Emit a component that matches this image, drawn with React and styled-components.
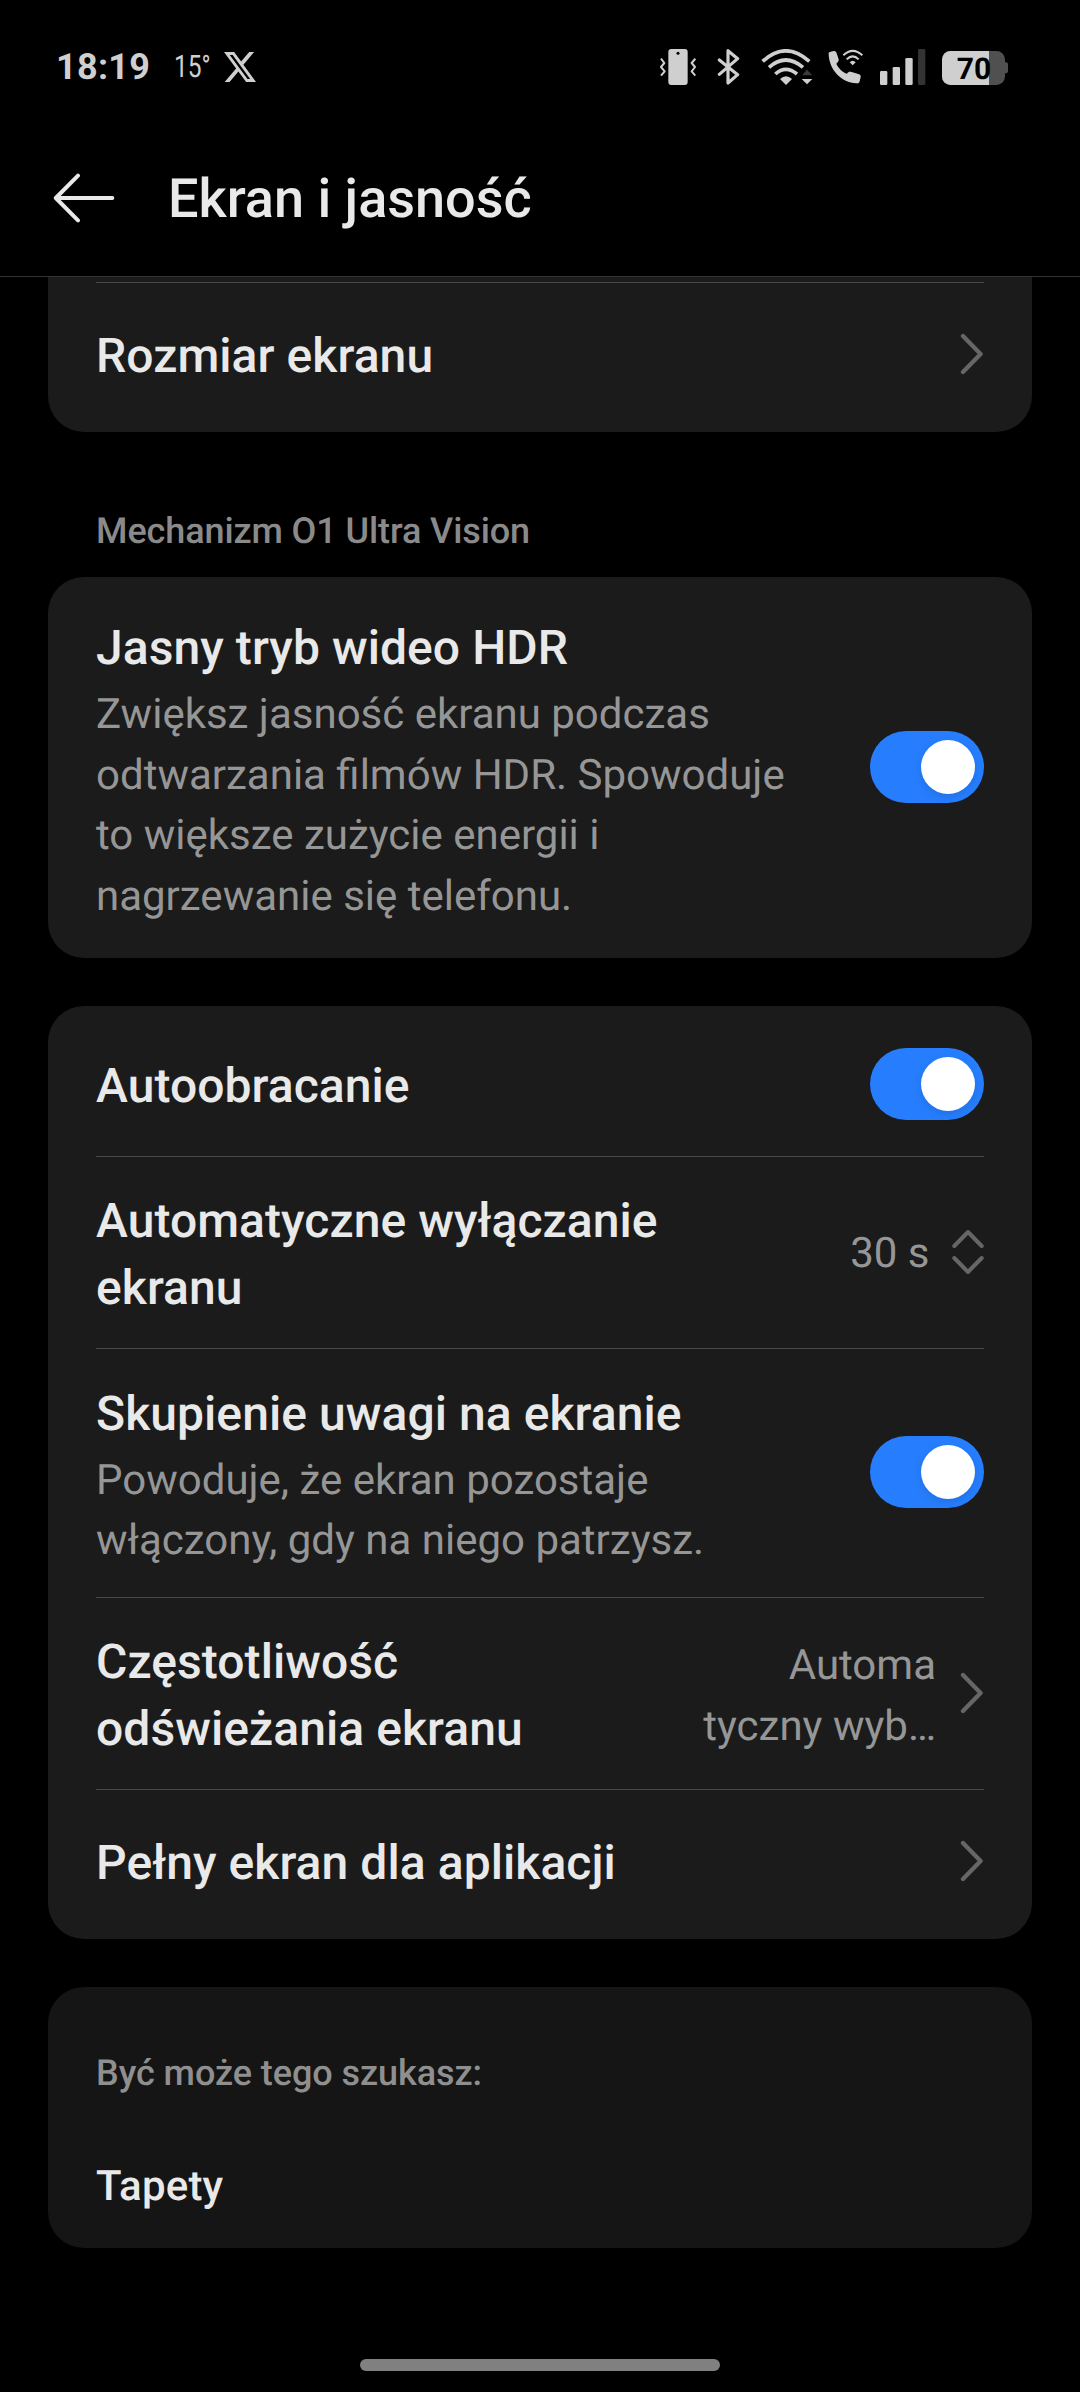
import { useState } from "react";
import styled, { createGlobalStyle } from "styled-components";

const GlobalStyle = createGlobalStyle`
  * {
    box-sizing: border-box;
  }
  body {
    margin: 0;
    background: #000;
    color: #e9e9e9;
    font-family: Roboto, "Noto Sans", sans-serif;
    text-rendering: geometricPrecision;
  }
`

const VibrateIcon = () => (
  <svg width="36" height="36" viewBox="60 57 108 108">
    <rect x="85" y="57" width="58" height="108" rx="9" fill="#cfcfcf" />
    <circle cx="114" cy="70" r="4.5" fill="#000" />
    <path d="M63 86L73 99L63 111L74 124L63 137M166 86L155 99L165 111L155 124L166 137" fill="none" stroke="#cfcfcf" strokeWidth="6" strokeLinejoin="round" />
  </svg>
);

const BluetoothIcon = () => (
  <svg width="33" height="36" viewBox="216 57 99 108">
    <path d="M238 90L293 134L264 159V62L293 86L238 133" fill="none" stroke="#cfcfcf" strokeWidth="9.5" strokeLinejoin="round" strokeLinecap="round" />
  </svg>
);

const WifiIcon = () => (
  <svg width="52" height="36" viewBox="363 57 156 108">
    <g fill="none" stroke="#cfcfcf" strokeWidth="11" strokeLinecap="butt">
      <path d="M368 94Q437 31 508 94" />
      <path d="M387 112Q437 68 489 112" />
      <path d="M406 132Q437 104 471 132" />
    </g>
    <path d="M420 147Q438 130 456 147L438 165Z" fill="#cfcfcf" />
    <path d="M486 136H517L501 119Z" fill="#3a3a3a" />
    <path d="M485 147H517L501 163Z" fill="#cfcfcf" />
  </svg>
);

const WifiCallIcon = () => (
  <svg width="35" height="36" viewBox="27 57 105 108" overflow="visible">
    <path d="M26 72C25 66 32 65 41 63C46 62 49 66 50 70L56 88C57 92 55 95 51 99L49 101C55 115 68 127 81 131C85 125 89 124 95 126L115 132C121 134 123 137 122 141L119 154C118 159 114 161 109 160C65 158 27 120 26 72Z" fill="#cfcfcf" />
    <path d="M70 76Q98 49 127 76M80 88Q98 70 116 88" fill="none" stroke="#cfcfcf" strokeWidth="6" />
    <path d="M89 97Q98 88 107 97L98 106Z" fill="#cfcfcf" />
  </svg>
);

const SignalIcon = () => (
  <svg width="46" height="36" viewBox="180 57 138 108">
    <g fill="#cfcfcf">
      <rect x="180" y="123" width="22" height="42" rx="4" />
      <rect x="218" y="111" width="22" height="54" rx="4" />
      <rect x="256" y="84" width="22" height="81" rx="4" />
    </g>
    <rect x="294" y="57" width="22" height="108" rx="4" fill="#333" />
  </svg>
);

const BatteryIcon = ({ level }) => (
  <svg width="66" height="36" viewBox="0 0 66 36" overflow="visible">
    <clipPath id="battery-shape">
      <rect x="0" y="2" width="63" height="34" rx="8.5" />
    </clipPath>
    <rect x="60" y="13.3" width="6" height="11" rx="2" fill="#505050" />
    <g clipPath="url(#battery-shape)">
      <rect x="0" y="2" width="63" height="34" fill="#505050" />
      <rect x="0" y="2" width="47" height="34" fill="#cfcfcf" />
    </g>
    <text x="32" y="30.3" textAnchor="middle" fontFamily="Roboto, sans-serif" fontSize="30" fontWeight="700" fill="#000">{level}</text>
  </svg>
);

const XLogo = () => (
  <svg width="32" height="30" viewBox="0 1.15 24 21.7" preserveAspectRatio="none">
    <path fill="#cfcfcf" d="M18.901 1.153h3.68l-8.04 9.19L24 22.846h-7.406l-5.8-7.584-6.638 7.584H.474l8.6-9.83L0 1.154h7.594l5.243 6.932ZM17.61 20.644h2.039L6.486 3.24H4.298Z" />
  </svg>
);

const BackIcon = () => (
  <svg width="62" height="50" viewBox="0 0 62 50" fill="none" stroke="#e9e9e9" strokeWidth="4" strokeLinecap="round" strokeLinejoin="round">
    <path d="M59.3 25H3M25 2.6L2.8 25L25 47.4" />
  </svg>
);

const ChevronIcon = () => (
  <svg width="24" height="42" viewBox="0 0 24 42" fill="none" stroke="#666" strokeWidth="4.3" strokeLinecap="round" strokeLinejoin="round">
    <path d="M3 3L20.6 21L3 39" />
  </svg>
);

const StepperIcon = () => (
  <svg width="32" height="46" viewBox="0 0 32 46" fill="none" stroke="#666" strokeWidth="4" strokeLinecap="round" strokeLinejoin="round">
    <path d="M2.3 17L16 3L29.7 17M2.3 29L16 43L29.7 29" />
  </svg>
);

const Switch = ({ label }) => {
  const [on, setOn] = useState(true);
  return (
    <Track type="button" role="switch" aria-checked={on} aria-label={label} $on={on} onClick={() => setOn(!on)}>
      <Knob />
    </Track>
  );
};

const Setting = ({ title, text, value, height, divider, shift, valueShift, endGap = 24, lift = 1, children }) => (
  <Row $height={height} $divider={divider}>
    <RowText $shift={shift}>
      <RowTitle>{title}</RowTitle>
      {text && <RowDescription>{text}</RowDescription>}
    </RowText>
    <RowEnd $gap={endGap} $lift={lift}>
      {value && <Value $shift={valueShift}>{value}</Value>}
      {children}
    </RowEnd>
  </Row>
);

const App = () => {
  return (
    <Screen>
      <GlobalStyle />
      <StatusBar>
        <Clock>18:19</Clock>
        <Temperature>15°</Temperature>
        <XLogo />
        <StatusIcons>
          <VibrateIcon />
          <BluetoothIcon />
          <WifiIcon />
          <WifiCallIcon />
          <SignalIcon />
          <BatteryIcon level={70} />
        </StatusIcons>
      </StatusBar>
      <Header>
        <BackIcon />
        <PageTitle>Ekran i jasność</PageTitle>
      </Header>
      <Content>
        <Card $cut>
          <Row $height={6} $divider />
          <Setting title="Rozmiar ekranu" height={143} shift={2}>
            <ChevronIcon />
          </Setting>
        </Card>
        <SectionTitle>Mechanizm O1 Ultra Vision</SectionTitle>
        <Card>
          <Setting
            title="Jasny tryb wideo HDR"
            text="Zwiększ jasność ekranu podczas odtwarzania filmów HDR. Spowoduje to większe zużycie energii i nagrzewanie się telefonu."
            height={369}
            shift={6}
          >
            <Switch label="Jasny tryb wideo HDR" />
          </Setting>
        </Card>
        <Card $spaced>
          <Setting title="Autoobracanie" height={145} divider shift={3}>
            <Switch label="Autoobracanie" />
          </Setting>
          <Setting title="Automatyczne wyłączanie ekranu" value="30 s" height={192} divider shift={3} valueShift={2} endGap={22.5}>
            <StepperIcon />
          </Setting>
          <Setting
            title="Skupienie uwagi na ekranie"
            text="Powoduje, że ekran pozostaje włączony, gdy na niego patrzysz."
            height={249}
            divider
            shift={5}
            lift={2}
          >
            <Switch label="Skupienie uwagi na ekranie" />
          </Setting>
          <Setting
            title="Częstotliwość odświeżania ekranu"
            value={<>Automa<br />tyczny wyb…</>}
            height={192}
            divider
            shift={3}
            valueShift={5}
          >
            <ChevronIcon />
          </Setting>
          <Setting title="Pełny ekran dla aplikacji" height={143} shift={1}>
            <ChevronIcon />
          </Setting>
        </Card>
        <SuggestionCard>
          <SuggestionLabel>Być może tego szukasz:</SuggestionLabel>
          <SuggestionLink>Tapety</SuggestionLink>
        </SuggestionCard>
      </Content>
      <HomeBar />
    </Screen>
  );
}

export default App;

const Screen = styled.div`
  display: flex;
  flex-direction: column;
  width: 1080px;
  height: 2392px;
  overflow: hidden;
  background: #000;

  svg {
    flex-shrink: 0;
  }
`

const StatusBar = styled.div`
  display: flex;
  align-items: center;
  height: 134px;
  padding: 0 72px 0 56px;
  color: #cfcfcf;
`

const Clock = styled.span`
  width: 118px;
  font-size: 36px;
  font-weight: 700;
  letter-spacing: 0.3px;
  line-height: 42px;
`

const Temperature = styled.span`
  width: 50px;
  font-size: 31px;
  font-weight: 400;
  line-height: 36px;
  transform: scaleX(0.79);
  transform-origin: left;
`

const StatusIcons = styled.div`
  display: flex;
  gap: 16px;
  margin-left: auto;
`

const Header = styled.header`
  display: flex;
  align-items: center;
  gap: 53px;
  height: 143px;
  padding: 0 53px 14px;
  border-bottom: 1px solid #333;
`

const PageTitle = styled.h1`
  margin: 0;
  padding-top: 4px;
  font-size: 54px;
  font-weight: 500;
  line-height: 64px;
`

const Content = styled.main`
  display: flex;
  flex-direction: column;
  padding: 0 48px;
`

const Card = styled.section`
  margin-top: ${props => props.$spaced ? '48px' : '0'};
  padding: ${props => props.$cut ? '0 48px 6px' : '6px 48px'};
  border-radius: ${props => props.$cut ? '0 0 36px 36px' : '36px'};
  background: #1b1b1b;
`

const SectionTitle = styled.h2`
  margin: 78px 48px 25px;
  color: #8a8a8a;
  font-size: 36px;
  font-weight: 500;
  letter-spacing: -0.1px;
  line-height: 42px;
`

const Row = styled.div`
  display: flex;
  align-items: center;
  justify-content: space-between;
  gap: 48px;
  height: ${props => props.$height}px;
  border-bottom: ${props => props.$divider ? '1px solid #474747' : '0'};
`

const RowText = styled.div`
  flex: 1;
  padding-top: ${props => props.$shift}px;
`

const RowTitle = styled.div`
  font-size: 48px;
  font-weight: 500;
  letter-spacing: 0.07px;
  line-height: 67px;
`

/* ligatures stay on here, so no letter-spacing */
const RowDescription = styled.div`
  margin-top: 4px;
  color: #969696;
  font-size: 42px;
  line-height: 60.5px;
`

const RowEnd = styled.div`
  display: flex;
  flex-shrink: 0;
  align-items: center;
  gap: ${props => props.$gap}px;
  margin-bottom: ${props => props.$lift}px;
`

const Value = styled.span`
  padding-top: ${props => props.$shift}px;
  color: #969696;
  font-size: 42px;
  line-height: 61px;
  text-align: right;
`

const Track = styled.button`
  display: flex;
  flex-shrink: 0;
  align-items: center;
  justify-content: ${props => props.$on ? 'flex-end' : 'flex-start'};
  width: 114px;
  height: 72px;
  padding: 0 9px;
  border: 0;
  border-radius: 36px;
  background: ${props => props.$on ? '#267eff' : '#4a4a4a'};
  cursor: pointer;
`

const Knob = styled.span`
  width: 54px;
  height: 54px;
  border-radius: 50%;
  background: #fff;
  box-shadow: 0 3px 10px rgba(0, 0, 0, 0.12);
`

const SuggestionCard = styled.section`
  display: flex;
  flex-direction: column;
  gap: 68px;
  height: 261px;
  margin-top: 48px;
  padding: 65px 48px 37px;
  border-radius: 36px;
  background: #151515;
`

const SuggestionLabel = styled.div`
  color: #8f8f8f;
  font-size: 36px;
  font-weight: 500;
  letter-spacing: -0.07px;
  line-height: 42px;
`

const SuggestionLink = styled.div`
  font-size: 42px;
  font-weight: 500;
  letter-spacing: 0.2px;
  line-height: 49px;
`

const HomeBar = styled.div`
  align-self: center;
  width: 360px;
  height: 12px;
  margin-top: 111px;
  border-radius: 6px;
  background: #808080;
`
